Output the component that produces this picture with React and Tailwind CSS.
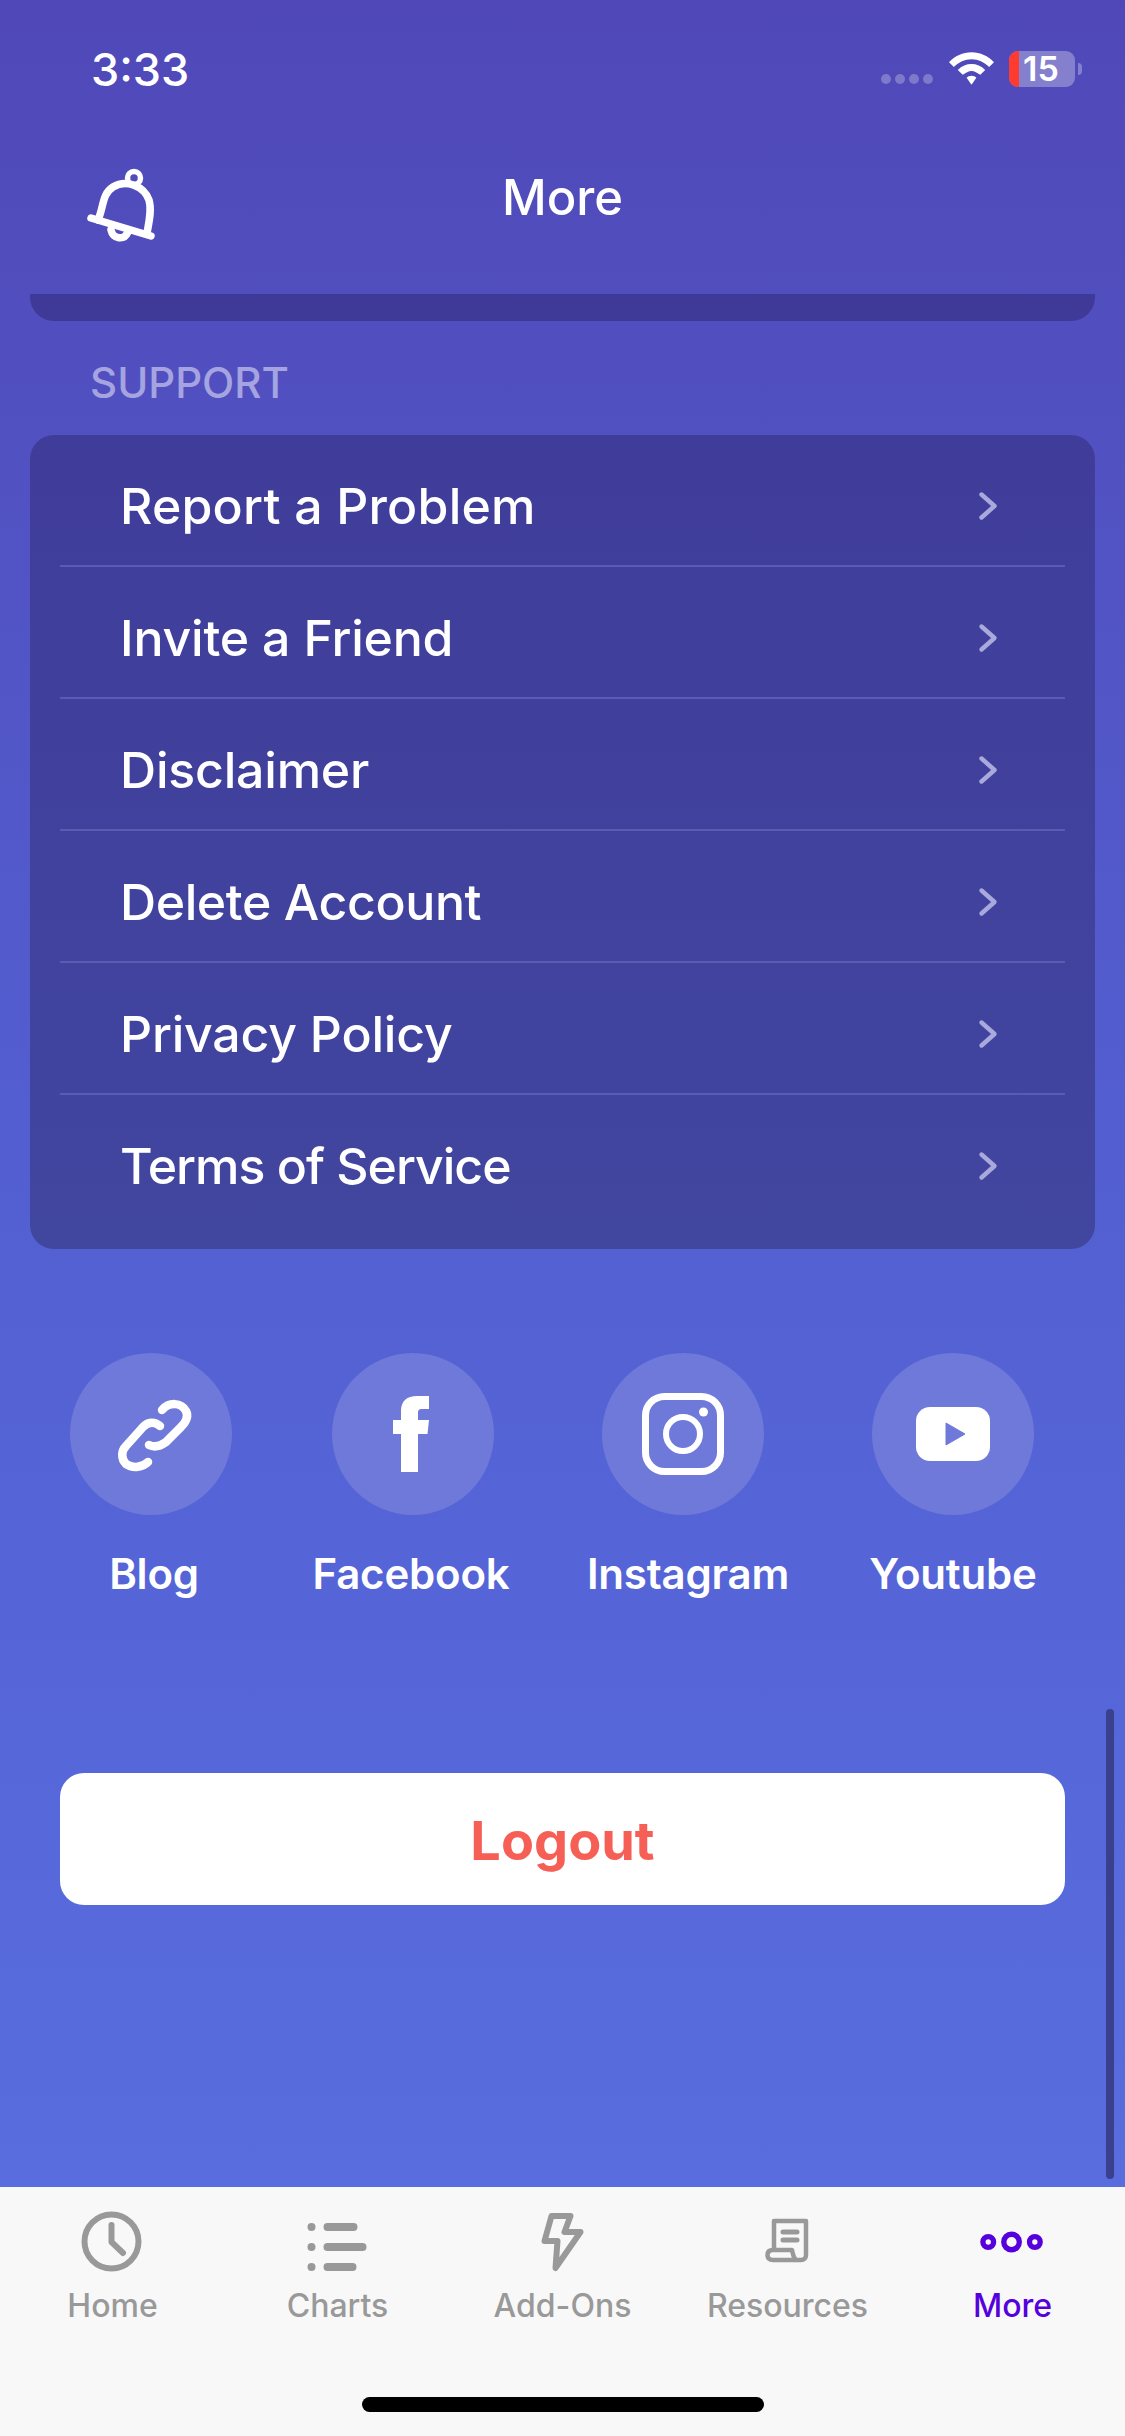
import React from "react";

const rows = [
  { label: "Report a Problem", cls: "tracking-[0.2px]" },
  { label: "Invite a Friend", cls: "tracking-[-0.2px]" },
  { label: "Disclaimer", cls: "tracking-[-0.2px]" },
  { label: "Delete Account", cls: "tracking-[-0.4px]" },
  { label: "Privacy Policy", cls: "tracking-[-0.2px]" },
  { label: "Terms of Service", cls: "tracking-[-1px]" },
];

function Chevron() {
  return (
    <svg width="22" height="32" viewBox="0 0 22 32" fill="none" stroke="#A9A9DD" strokeWidth="4.4" strokeLinecap="round" strokeLinejoin="round">
      <path d="M4.5 4.5 L17.5 16 L4.5 27.5" />
    </svg>
  );
}

function Bell() {
  return (
    <svg width="120" height="120" viewBox="0 0 120 120" fill="none" stroke="#fff" strokeWidth="7.5" strokeLinecap="round" strokeLinejoin="round">
      <circle cx="74" cy="38" r="6.5" strokeWidth="5.5" />
      <path d="M38 80 C44 66 42 54 53 47 C66 39 84 46 89 60 C92 70 89 82 87 93" />
      <path d="M31 78 L91 96" />
      <path d="M51 90 C53 99 64 101 68 92" />
    </svg>
  );
}

function LinkIcon() {
  return (
    <svg width="100" height="100" viewBox="0 0 100 100" fill="none" stroke="#fff" strokeWidth="8.5" strokeLinecap="round" strokeLinejoin="round">
      <path d="M61 26 C68 18 80 18 85 27 C88 33 85 38 80 43 L65 58 C58 63 52 63 48 61" />
      <path d="M59 42 C53 37 47 38 42 43 L25 62 C20 67 20 75 25 80 C32 85 42 83 47 78" />
    </svg>
  );
}

function FbIcon() {
  return (
    <svg width="80" height="80" viewBox="0 0 80 80" fill="#fff">
      <path d="M28 78 V40 H20 V26 H28 V17 C28 7 34 2 44 2 H56 V15 H49 C46 15 45 16 45 19 V26 H56 L54.5 40 H45 V78 Z" />
    </svg>
  );
}

function IgIcon() {
  return (
    <svg width="82" height="82" viewBox="0 0 82 82" fill="none" stroke="#fff" strokeWidth="7">
      <rect x="3.5" y="3.5" width="75" height="75" rx="19" />
      <circle cx="41" cy="41" r="17" strokeWidth="6" />
      <circle cx="61.5" cy="19" r="4.5" fill="#fff" stroke="none" />
    </svg>
  );
}

function YtIcon() {
  return (
    <svg width="74" height="54" viewBox="0 0 74 54">
      <rect x="0" y="0" width="74" height="54" rx="14" fill="#fff" />
      <path d="M30 16 L49 27 L30 38 Z" fill="#6F79D9" stroke="#6F79D9" strokeWidth="1" strokeLinejoin="round" />
    </svg>
  );
}

function Social({ label, labelCls = "", children }) {
  return (
    <div className="w-[162px] flex flex-col items-center">
      <div className="w-[162px] h-[162px] rounded-full bg-[#6F79D9] flex items-center justify-center">{children}</div>
      <div className={`mt-[34px] whitespace-nowrap text-[42px] leading-[50px] font-semibold tracking-[-0.2px] text-white ${labelCls}`}>{label}</div>
    </div>
  );
}

function ClockIcon() {
  return (
    <svg width="66" height="66" viewBox="0 0 66 66" fill="none" stroke="#999" strokeWidth="6" strokeLinecap="round" strokeLinejoin="round">
      <circle cx="31.5" cy="32.5" r="27" />
      <path d="M31.5 16 V33 L43 44" />
    </svg>
  );
}

function ListIcon() {
  return (
    <svg width="66" height="66" viewBox="0 0 66 66" fill="#999">
      <circle cx="6.5" cy="18" r="4" /><rect x="18.5" y="14" width="34" height="8" rx="4" />
      <circle cx="6.5" cy="38" r="4" /><rect x="18.5" y="34" width="43" height="8" rx="4" />
      <circle cx="6.5" cy="58" r="4" /><rect x="18.5" y="54" width="33" height="8" rx="4" />
    </svg>
  );
}

function BoltIcon() {
  return (
    <svg width="66" height="66" viewBox="0 0 66 66" fill="none" stroke="#999" strokeWidth="6" strokeLinejoin="round" strokeLinecap="round">
      <path d="M21.5 7 H40.5 L34.5 23 H50.5 L25.5 59 L27.5 32 H14.5 Z" />
    </svg>
  );
}

function DocIcon() {
  return (
    <svg width="66" height="66" viewBox="0 0 66 66" fill="none" stroke="#999" strokeWidth="4.5" strokeLinejoin="round" strokeLinecap="round">
      <path d="M19 41 V12 H51 V46 C51 49 49 51 46 51 H18 C14 51 12.5 49 12.5 46 C12.5 43 14 41 18 41 H37 C38 45 38 48 41 51" />
      <path d="M28 23 H42 M28 31 H42" strokeWidth="5" />
    </svg>
  );
}

function DotsIcon() {
  return (
    <svg width="68" height="30" viewBox="0 0 68 30" fill="none" stroke="#5500DD" strokeWidth="5.5">
      <circle cx="8.5" cy="15" r="5.5" />
      <circle cx="32.5" cy="15" r="8" />
      <circle cx="56.5" cy="15" r="5.5" />
    </svg>
  );
}

function Tab({ label, active, children }) {
  return (
    <div className="flex flex-col items-center">
      <div className="h-[66px] w-[66px] flex items-center justify-center">{children}</div>
      <div className={`mt-[11px] text-[32px] leading-[40px] font-medium ${active ? "text-[#5500DD]" : "text-[#999999]"}`}>{label}</div>
    </div>
  );
}

export default function App() {
  return (
    <div className="relative w-[1125px] h-[2436px] overflow-hidden flex flex-col bg-gradient-to-b from-[#5048B8] via-[#5360D2] to-[#5A70E2] font-['Inter','Liberation_Sans',sans-serif] text-white">
      {/* status bar */}
      <div className="h-[136px] shrink-0 pl-[91px] pr-[43px] flex items-start justify-between">
        <div className="mt-[46px] text-[45px] leading-[48px] font-medium">3:33</div>
        <div className="mt-[51px] flex items-center">
          <div className="flex gap-[4px] mt-[20px] mr-[16px]">
            {[0, 1, 2, 3].map((i) => <div key={i} className="w-[10px] h-[10px] rounded-full bg-[#7F79CB]" />)}
          </div>
          <svg width="45" height="34" viewBox="0 0 46 34" fill="#fff">
            <path d="M23 0 C32 0 40 4 46 10 L41 15 C36 10 30 7 23 7 C16 7 10 10 5 15 L0 10 C6 4 14 0 23 0 Z" />
            <path d="M23 12 C28 12 33 14 37 18 L32 23 C29 21 26 19 23 19 C20 19 17 21 14 23 L9 18 C13 14 18 12 23 12 Z" />
            <path d="M23 24 C25 24 27 25 28 26 L23 33 L18 26 C19 25 21 24 23 24 Z" />
          </svg>
          <div className="ml-[15px] relative w-[66px] h-[36px] rounded-[9px] bg-[#8480CE] flex items-center pl-[14px]">
            <div className="absolute left-0 top-0 bottom-0 w-[10px] rounded-l-[9px] bg-[#FF3B30]" />
            <span className="relative text-[34px] leading-[36px] font-semibold">15</span>
          </div>
          <div className="w-[4px] h-[12px] ml-[3px] rounded-r-full bg-[#8480CE]" />
        </div>
      </div>

      {/* nav */}
      <div className="relative h-[158px] shrink-0 flex items-center justify-center">
        <div className="absolute left-[60px] top-[4px]"><Bell /></div>
        <div className="text-[49px] leading-[56px] font-medium -mt-[34px]">More</div>
      </div>

      {/* previous section's end */}
      <div className="mx-[30px] h-[27px] shrink-0 rounded-b-[24px] bg-[#3F3A98]" />

      <div className="ml-[90px] mt-[40px] text-[42px] leading-[44px] font-medium text-[#A5A4E0]">SUPPORT</div>

      <div className="mx-[30px] mt-[30px] rounded-[24px] bg-gradient-to-b from-[#403D9A] to-[#41469F] shrink-0 pb-[22px]">
        {rows.map((r, i) => (
          <div key={r.label} className={`mx-[30px] h-[132px] pt-[41px] pl-[60px] pr-[66px] ${i < rows.length - 1 ? "border-b-[2px] border-[#5A5CB0]" : ""}`}>
            <div className="h-[60px] flex items-center justify-between">
              <span className={`text-[50px] leading-[60px] font-medium ${r.cls}`}>{r.label}</span>
              <Chevron />
            </div>
          </div>
        ))}
      </div>

      <div className="mt-[104px] pl-[70px] flex gap-[100px]">
        <Social label="Blog" labelCls="translate-x-[3px]"><LinkIcon /></Social>
        <div className="mr-[8px]"><Social label="Facebook" labelCls="-translate-x-[2px]"><FbIcon /></Social></div>
        <div className="mr-[8px]"><Social label="Instagram" labelCls="translate-x-[5px]"><IgIcon /></Social></div>
        <Social label="Youtube"><YtIcon /></Social>
      </div>

      <div className="mx-[60px] mt-[174px] h-[132px] pt-[2px] rounded-[24px] bg-white flex items-center justify-center text-[54px] font-bold text-[#F65F56]">
        Logout
      </div>

      <div className="flex-1" />

      {/* tab bar */}
      <div className="h-[249px] shrink-0 bg-[#F8F8F8] relative pt-[22px]">
        <div className="grid grid-cols-5">
          <Tab label="Home"><ClockIcon /></Tab>
          <Tab label="Charts"><ListIcon /></Tab>
          <Tab label="Add-Ons"><BoltIcon /></Tab>
          <Tab label="Resources"><DocIcon /></Tab>
          <Tab label="More" active><DotsIcon /></Tab>
        </div>
        <div className="absolute left-[362px] top-[210px] w-[402px] h-[15px] rounded-full bg-black" />
      </div>

      {/* scroll indicator */}
      <div className="absolute left-[1106px] top-[1709px] w-[8px] h-[470px] rounded-full bg-[#3A3F8E]" />
    </div>
  );
}
